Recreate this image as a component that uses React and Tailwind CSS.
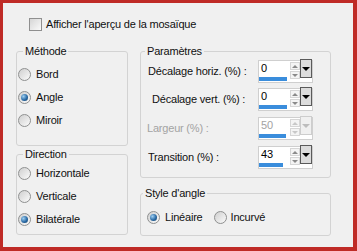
import React from 'react'

function Radio({ checked }) {
  return (
    <span className="flex h-[13px] w-[13px] shrink-0 items-center justify-center rounded-full border border-[#8f9090] bg-gradient-to-br from-[#cfcfcf] to-[#fbfbfb]">
      {checked && (
        <span className="h-[7px] w-[7px] rounded-full bg-[radial-gradient(circle_at_35%_35%,#9fd0f2,#2b6ba6_55%,#0f3a60)]" />
      )}
    </span>
  )
}

function RadioRow({ label, checked }) {
  return (
    <div className="flex h-[23px] items-center gap-[5px] pl-[1px]">
      <Radio checked={checked} />
      <span>{label}</span>
    </div>
  )
}

function Spin({ value, fill, disabled }) {
  const tone = disabled ? 'text-[#a3a3a3]' : 'text-black'
  return (
    <div className="flex h-[23px] w-[55px] items-start border border-[#cfcfcf] bg-white">
      <div className="flex h-full w-[31px] flex-col justify-between">
        <div className={`pl-[2px] leading-[15px] ${tone}`}>{value}</div>
        <div className="mb-[1px] h-[4px] bg-[#3a8ddc]" style={{ width: fill }} />
      </div>
      <div className="mt-[1px] flex w-[10px] flex-col gap-[1px]">
        <div className="flex h-[8px] items-center justify-center border border-[#d6d6d6] bg-[#f4f4f4]">
          <span className={`h-0 w-0 border-x-[3px] border-b-[3px] border-x-transparent ${disabled ? 'border-b-[#c8c8c8]' : 'border-b-[#8a8a8a]'}`} />
        </div>
        <div className="flex h-[8px] items-center justify-center border border-[#d6d6d6] bg-[#f4f4f4]">
          <span className={`h-0 w-0 border-x-[3px] border-t-[3px] border-x-transparent ${disabled ? 'border-t-[#c8c8c8]' : 'border-t-[#8a8a8a]'}`} />
        </div>
      </div>
      <div className={`-mt-[2px] flex h-[19px] w-[12px] items-center justify-center border ${disabled ? 'border-[#cdcdcd] bg-[#f0f0f0]' : 'border-[#5a5a5a] bg-[#dcdcdc]'}`}>
        <span className={`h-0 w-0 border-x-[4px] border-t-[4px] border-x-transparent ${disabled ? 'border-t-[#bdbdbd]' : 'border-t-black'}`} />
      </div>
    </div>
  )
}

function ParamRow({ label, indent, value, fill, disabled, top }) {
  return (
    <div className={`flex h-[23px] items-center ${top}`}>
      <div className={`w-[117px] ${indent} ${disabled ? 'text-[#a3a3a3]' : ''}`}>{label}</div>
      <Spin value={value} fill={fill} disabled={disabled} />
    </div>
  )
}

export default function App() {
  return (
    <div className="h-[251px] w-[357px] border-b-[4px] border-l-[3px] border-r-[4px] border-t-[3px] border-[#bf2b26] font-['Liberation_Sans',Arial,sans-serif] text-[11px] tracking-[-0.2px] text-[#111]">
      <div className="h-full bg-[#f0f0f0] pl-[13px] pt-[15px]">
        <div className="flex h-[13px] items-center gap-[4px] pl-[13px]">
          <span className="h-[13px] w-[13px] border border-[#8f8f8f] bg-gradient-to-br from-[#d6d6d6] to-[#fafafa]" />
          <span>Afficher l'aperçu de la mosaïque</span>
        </div>

        <div className="mt-[14px] flex gap-[12px]">
          <div className="flex w-[112px] flex-col gap-[2px]">
            <fieldset className="h-[101px] rounded-[3px] border border-[#d3d3d3] pt-[6px]">
              <legend className="ml-[6px] px-[2px] leading-[12px]">Méthode</legend>
              <RadioRow label="Bord" />
              <RadioRow label="Angle" checked />
              <RadioRow label="Miroir" />
            </fieldset>
            <fieldset className="h-[87px] rounded-[3px] border border-[#d3d3d3] pt-[2px]">
              <legend className="ml-[6px] px-[2px] leading-[12px]">Direction</legend>
              <RadioRow label="Horizontale" />
              <RadioRow label="Verticale" />
              <RadioRow label="Bilatérale" checked />
            </fieldset>
          </div>

          <div className="flex w-[191px] flex-col gap-[9px]">
            <fieldset className="h-[133px] rounded-[3px] border border-[#d3d3d3] pt-[3px]">
              <legend className="ml-[4px] px-[2px] leading-[12px]">Paramètres</legend>
              <ParamRow label="Décalage horiz. (%) :" indent="pl-[7px]" value="0" fill="28px" />
              <ParamRow label="Décalage vert. (%) :" indent="pl-[11px]" value="0" fill="28px" top="mt-[5px]" />
              <ParamRow label="Largeur (%) :" indent="pl-[6px]" value="50" fill="27px" disabled top="mt-[6px]" />
              <ParamRow label="Transition (%) :" indent="pl-[7px]" value="43" fill="24px" top="mt-[6px]" />
            </fieldset>
            <fieldset className="h-[49px] rounded-[3px] border border-[#d3d3d3] pt-[10px]">
              <legend className="ml-[2px] px-[2px] leading-[12px]">Style d'angle</legend>
              <div className="flex items-center pl-[6px]">
                <Radio checked />
                <span className="ml-[5px]">Linéaire</span>
                <span className="ml-[11px]"><Radio /></span>
                <span className="ml-[4px]">Incurvé</span>
              </div>
            </fieldset>
          </div>
        </div>
      </div>
    </div>
  )
}
